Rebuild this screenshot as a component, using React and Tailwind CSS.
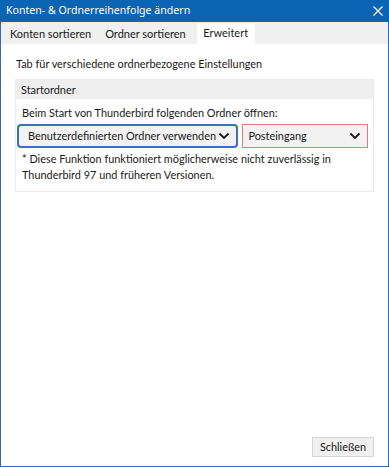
import React from 'react';

const Chevron = () => (
  <svg width="12" height="8" viewBox="0 0 12 8" className="shrink-0">
    <path d="M1.5 1.5 L6 6 L10.5 1.5" fill="none" stroke="#1a1a1a" strokeWidth="1.8" />
  </svg>
);

const App = () => {
  return (
    <div
      className="w-[389px] h-[467px] flex flex-col border border-t-0 border-[#2e6db4] bg-white text-[10.9px] text-[#1a1a1a]"
      style={{ fontFamily: 'Lato, "Noto Sans", sans-serif' }}>
      {/* title bar */}
      <div
        className="h-[22px] shrink-0 flex items-center justify-between bg-[#0b63b3] text-white pl-[6px] pr-[6px] -mx-px"
        style={{ fontFamily: '"Noto Sans", sans-serif' }}>
        <span className="text-[10.6px]">Konten- &amp; Ordnerreihenfolge ändern</span>
        <svg width="10" height="10" viewBox="0 0 10 10">
          <path d="M0.5 0.5 L9.5 9.5 M9.5 0.5 L0.5 9.5" stroke="white" strokeWidth="1.2" />
        </svg>
      </div>

      {/* tabs */}
      <div className="h-[22px] shrink-0 flex items-end bg-[#f0f0f0] pl-[1px] text-[11px]">
        <div className="h-[20px] flex items-center pl-[8px] pr-[7px]">Konten sortieren</div>
        <div className="h-[20px] flex items-center px-[7px]">Ordner sortieren</div>
        <div className="h-[21px] w-[58px] flex items-center justify-center bg-white ml-[4px]">Erweitert</div>
      </div>

      {/* content */}
      <div className="flex-1 flex flex-col px-[14px] pb-[9px]">
        <p className="mt-[12px] ml-px">Tab für verschiedene ordnerbezogene Einstellungen</p>

        <div className="mt-[7px] border border-[#ebebeb]">
          <div className="h-[19px] flex items-center px-[5px] bg-[#efefef]">Startordner</div>
          <div className="px-[5px] pt-[6px] pb-[8px]">
            <p className="ml-px">Beim Start von Thunderbird folgenden Ordner öffnen:</p>
            <div className="flex gap-[4px] mt-[2px] -ml-[4px]">
              <div className="w-[224px] h-[24px] flex items-center justify-between pl-[9px] pr-[6px] bg-[#f2f2f2] border-2 border-[#3573bd] rounded-[4px] whitespace-nowrap">
                <span>Benutzerdefinierten Ordner verwenden</span>
                <Chevron />
              </div>
              <div className="w-[127px] h-[24px] flex items-center justify-between pl-[5px] pr-[6px] bg-[#f2f2f2] border border-[#e07b7b] whitespace-nowrap">
                <span>Posteingang</span>
                <Chevron />
              </div>
            </div>
            <p className="mt-[3px] leading-[16px] ml-px">
              * Diese Funktion funktioniert möglicherweise nicht zuverlässig in
              <br />
              Thunderbird 97 und früheren Versionen.
            </p>
          </div>
        </div>

        <div className="flex-1" />
        <div className="flex justify-end">
          <button
            type="button"
            className="w-[62px] h-[20px] flex items-center justify-center bg-[#f0f0f0] border border-[#d6d6d6] text-[10.9px] text-[#1a1a1a]">
            Schließen
          </button>
        </div>
      </div>
    </div>
  );
};

export default App;
